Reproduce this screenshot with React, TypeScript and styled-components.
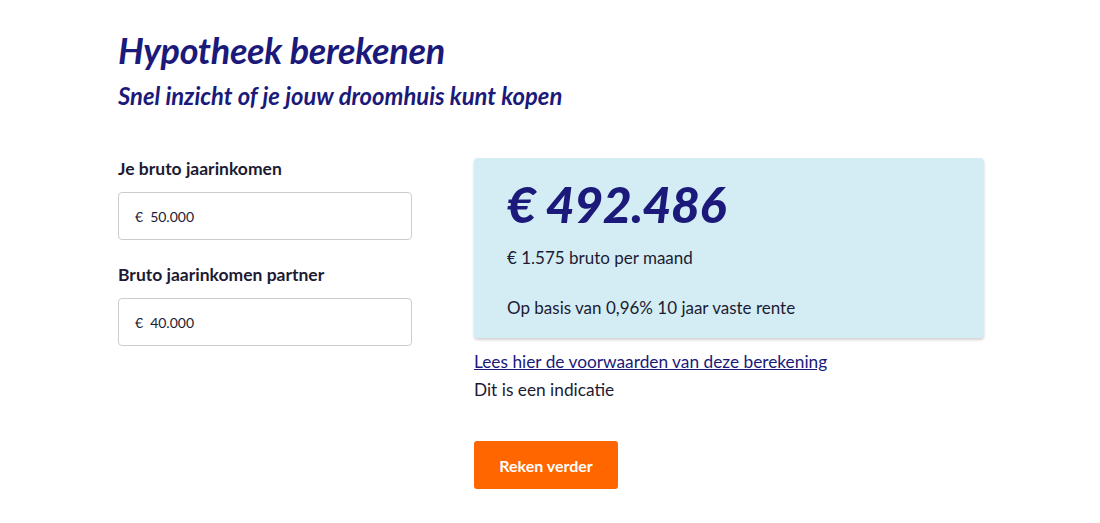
import React from 'react'
import styled, { createGlobalStyle } from 'styled-components'

const GlobalStyle = createGlobalStyle`
  body {
    margin: 0;
    background: #ffffff;
    font-family: 'Lato', 'Open Sans', sans-serif;
    color: #1c1b33;
  }
`

const Page = styled.div`
  padding: 28px 0 0 118px;
  width: 866px;
`

const Header = styled.header`
  margin-bottom: 47px;
`

const Title = styled.h1`
  margin: 0;
  font-size: 36px;
  font-style: italic;
  font-weight: 700;
  color: #1b1a7a;
  line-height: 44px;
  letter-spacing: -0.3px;
`

const Subtitle = styled.h2`
  margin: 9px 0 0 0;
  font-size: 23.8px;
  font-style: italic;
  font-weight: 700;
  color: #1b1a7a;
  line-height: 30px;
`

const Columns = styled.div`
  display: flex;
  gap: 62px;
  align-items: flex-start;
`

const Form = styled.div`
  width: 294px;
  display: flex;
  flex-direction: column;
`

const Field = styled.div<{ $first?: boolean }>`
  display: flex;
  flex-direction: column;
  margin-top: ${(p) => (p.$first ? '0' : '24px')};
`

const Label = styled.label`
  font-size: 17.5px;
  font-weight: 700;
  line-height: 22px;
  margin-bottom: 12px;
  color: #1c1b33;
`

const InputBox = styled.div`
  height: 46px;
  border: 1px solid #cccccc;
  border-radius: 4px;
  display: flex;
  align-items: center;
  padding: 0 16px;
  font-size: 14px;
  color: #1c1b33;
  gap: 7px;
`

const Result = styled.div`
  width: 510px;
  display: flex;
  flex-direction: column;
`

const Panel = styled.div`
  background: #d4edf4;
  border-radius: 4px;
  box-shadow: 0 2px 3px rgba(0, 0, 0, 0.18);
  padding: 14px 32px 20px 33px;
  height: 180px;
  box-sizing: border-box;
`

const Amount = styled.div`
  font-size: 50px;
  font-weight: 900;
  font-style: italic;
  color: #1b1a7a;
  line-height: 64px;
  letter-spacing: -0.5px;
`

const PanelText = styled.p<{ $gap: number }>`
  margin: ${(p) => p.$gap}px 0 0 0;
  font-size: 17px;
  line-height: 22px;
  color: #1c1b33;
`

const TermsLink = styled.a`
  margin-top: 13px;
  font-size: 17.3px;
  line-height: 22px;
  color: #1b1a7a;
  text-decoration: underline;
  align-self: flex-start;
`

const Note = styled.div`
  margin-top: 6px;
  font-size: 17.3px;
  line-height: 22px;
  color: #1c1b33;
`

const Button = styled.button`
  margin-top: 40px;
  align-self: flex-start;
  width: 144px;
  height: 48px;
  border: none;
  border-radius: 3px;
  background: #ff6600;
  color: #ffffff;
  font-family: inherit;
  font-size: 16px;
  font-weight: 700;
  cursor: pointer;
`

export default function App() {
  return (
    <>
      <GlobalStyle />
      <Page>
        <Header>
          <Title>Hypotheek berekenen</Title>
          <Subtitle>Snel inzicht of je jouw droomhuis kunt kopen</Subtitle>
        </Header>
        <Columns>
          <Form>
            <Field $first>
              <Label>Je bruto jaarinkomen</Label>
              <InputBox>
                <span>€</span>
                <span>50.000</span>
              </InputBox>
            </Field>
            <Field>
              <Label>Bruto jaarinkomen partner</Label>
              <InputBox>
                <span>€</span>
                <span>40.000</span>
              </InputBox>
            </Field>
          </Form>
          <Result>
            <Panel>
              <Amount>€ 492.486</Amount>
              <PanelText $gap={11}>€ 1.575 bruto per maand</PanelText>
              <PanelText $gap={28}>Op basis van 0,96% 10 jaar vaste rente</PanelText>
            </Panel>
            <TermsLink href="#">Lees hier de voorwaarden van deze berekening</TermsLink>
            <Note>Dit is een indicatie</Note>
            <Button>Reken verder</Button>
          </Result>
        </Columns>
      </Page>
    </>
  )
}
